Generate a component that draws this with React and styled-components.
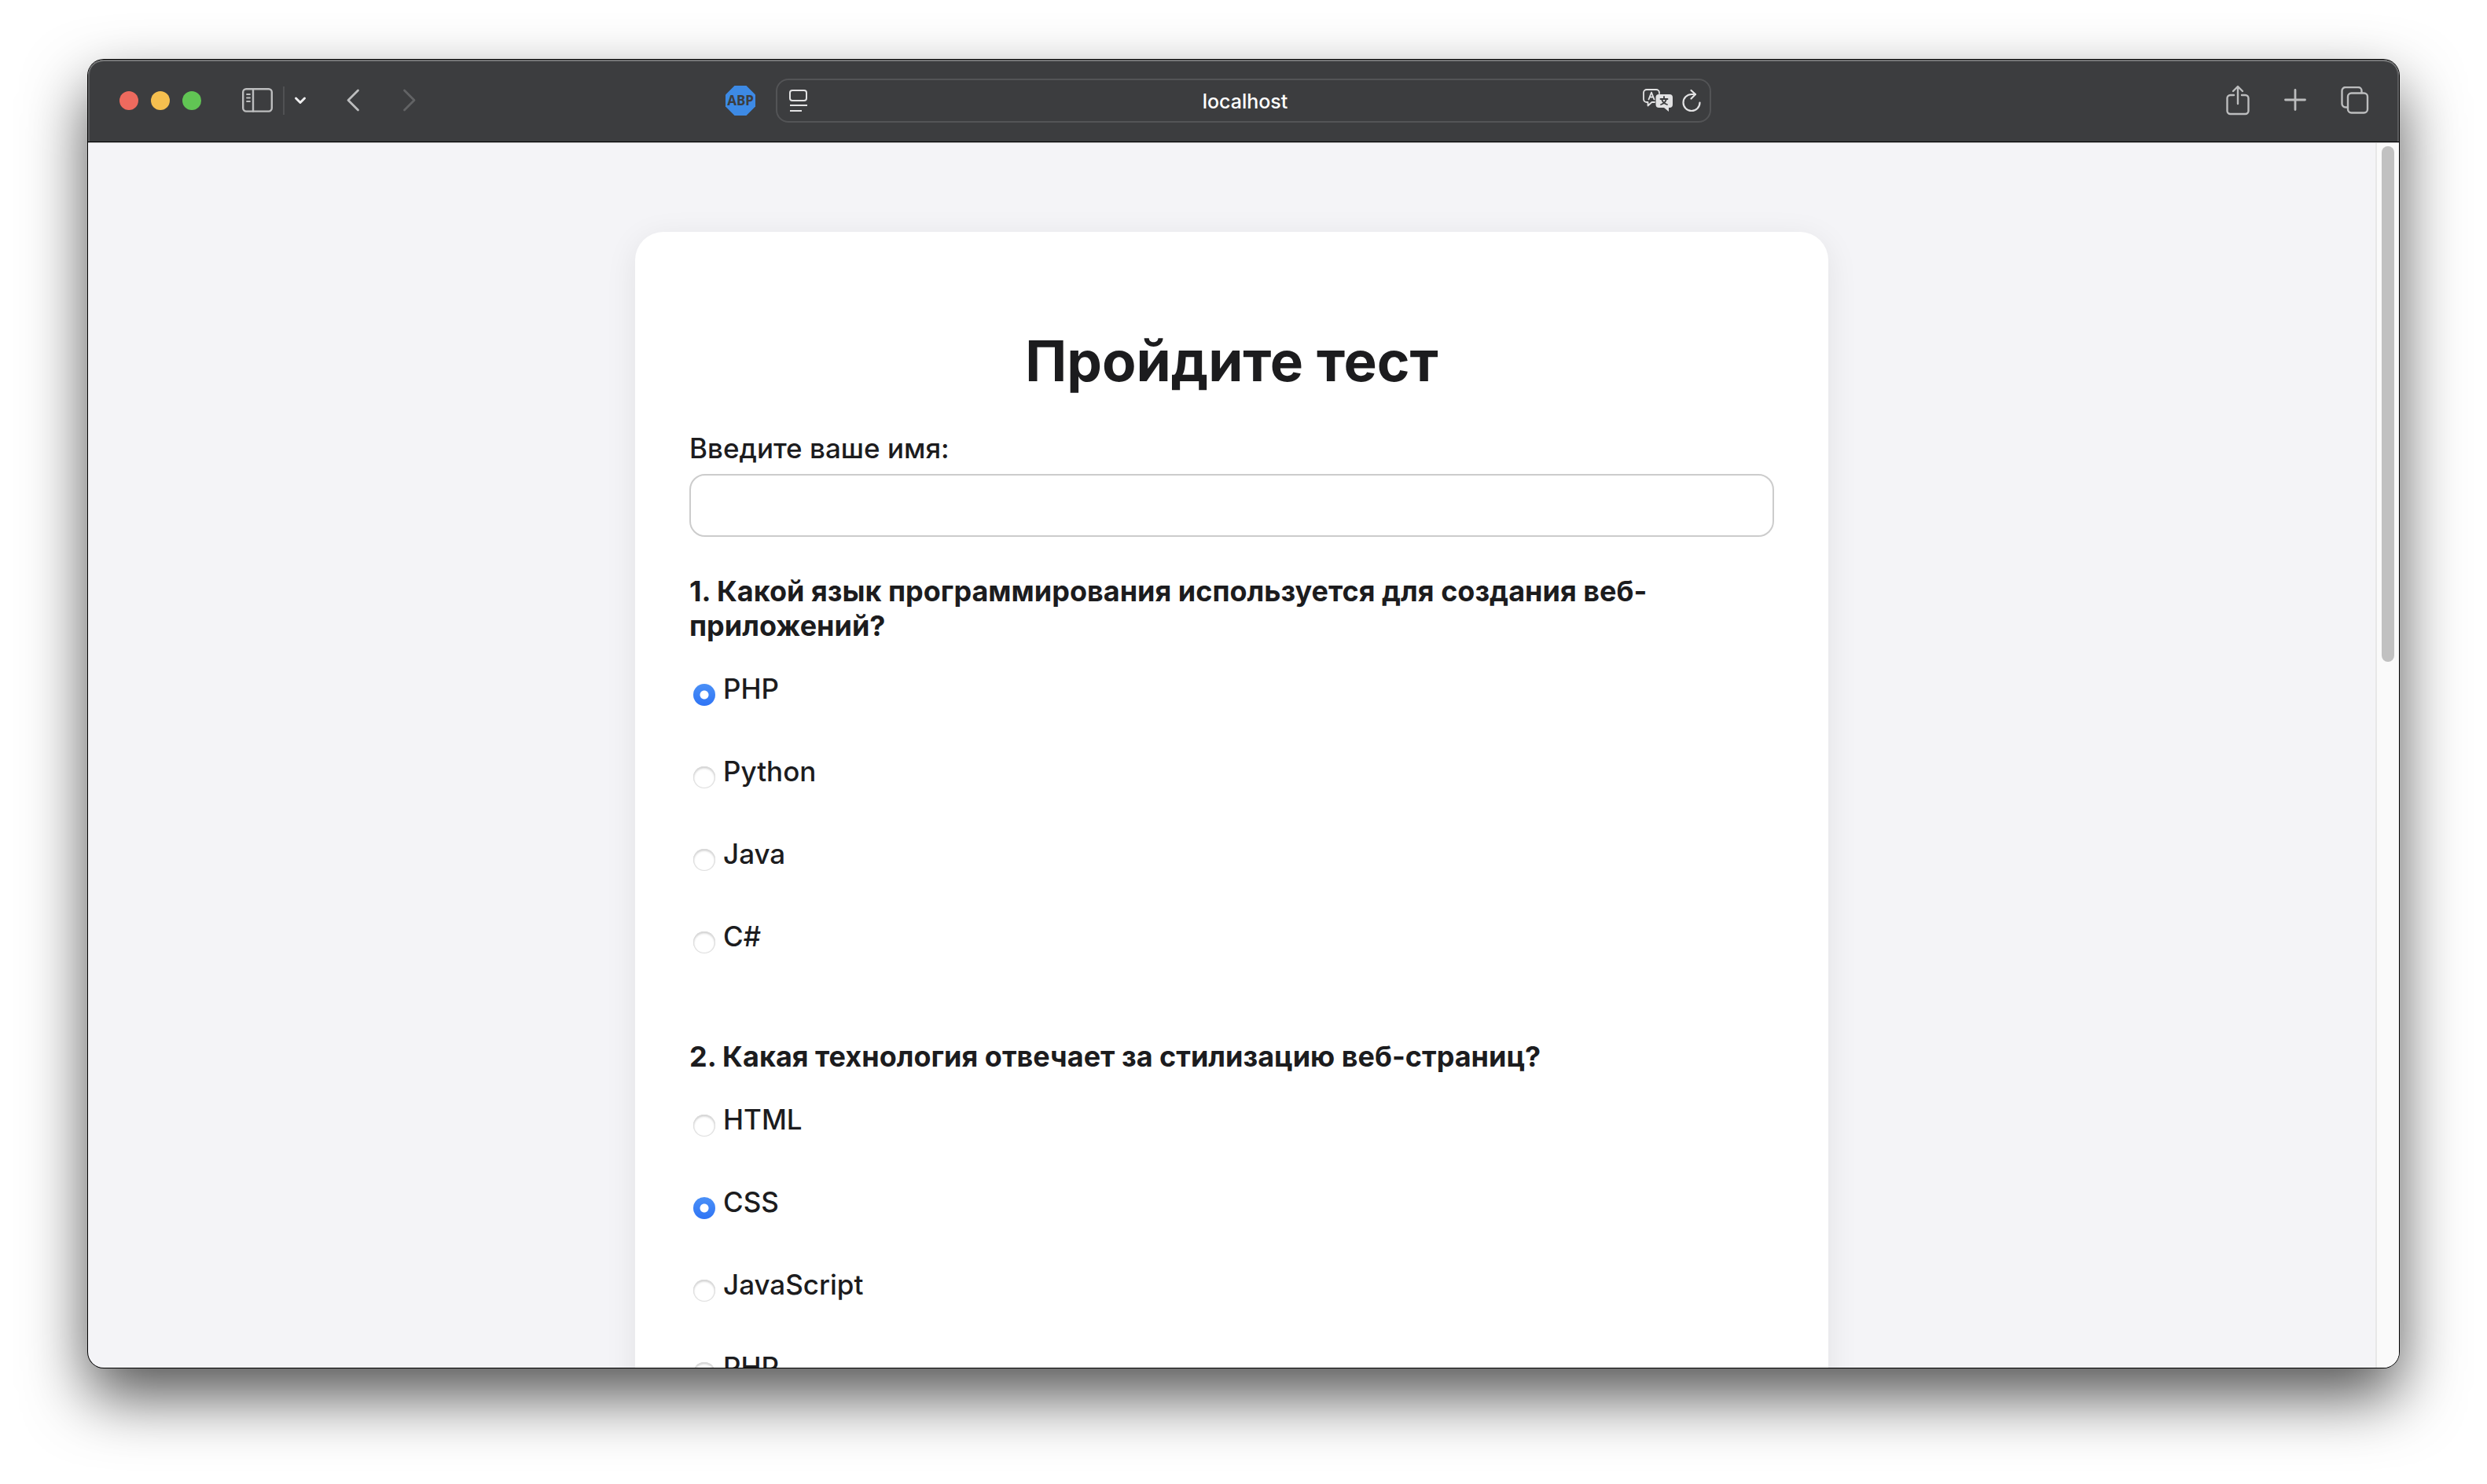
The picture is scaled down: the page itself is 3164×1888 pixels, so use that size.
import React, { useState } from "react";
import styled, { createGlobalStyle } from "styled-components";

const GlobalStyle = createGlobalStyle`
  *, *::before, *::after { box-sizing: border-box; }
  html, body { margin: 0; background: #fff; }
  body {
    font-family: Inter, "Liberation Sans", sans-serif;
    font-size: 35px;
    font-weight: 500;
    line-height: 44px;
    color: #1c1c1e;
  }
`;

const Desktop = styled.div`
  display: flex;
  height: 100vh;
  padding: 76px 112px 148px;
  background: #fff;
`;

const BrowserWindow = styled.div`
  flex: 1;
  min-width: 0;
  display: flex;
  flex-direction: column;
  overflow: hidden;
  border-radius: 20px;
  background: #f4f4f7;
  box-shadow: 0 0 0 1px #000, 0 36px 80px rgba(0, 0, 0, 0.68);
`;

const Toolbar = styled.header`
  flex: none;
  display: grid;
  grid-template-columns: 1fr minmax(0, 1190px) 1fr;
  align-items: center;
  height: 105px;
  border-bottom: 1px solid #000;
  border-radius: 20px 20px 0 0;
  background: #3c3d3f;
  box-shadow: inset 0 2px 0 #737475, inset 2px 0 0 #5d5e60, inset -2px 0 0 #5d5e60;
`;

const ToolGroup = styled.div`
  display: flex;
  align-items: center;
  padding: ${(p) => (p.$end ? "0 38px 0 0" : "0 26px 0 40px")};
  justify-content: ${(p) => (p.$end ? "flex-end" : "flex-start")};
  gap: ${(p) => p.$gap || 0}px;
`;

const Lights = styled.div`
  display: flex;
  gap: 16px;
  margin-right: 52px;
`;

const Light = styled.button`
  width: 24px;
  height: 24px;
  padding: 0;
  border: 0;
  border-radius: 50%;
  background: ${(p) => p.$color};
`;

const IconButton = styled.button`
  display: flex;
  flex: none;
  padding: 0;
  border: 0;
  background: none;
  color: ${(p) => p.$color || "#bcbdbe"};
  margin-left: ${(p) => (p.$push ? "auto" : "0")};

  svg {
    display: block;
    fill: none;
    stroke: currentColor;
    stroke-linecap: round;
    stroke-linejoin: round;
  }
`;

const Divider = styled.span`
  width: 2px;
  height: 36px;
  margin: 0 12px;
  background: #505153;
`;

const NavButtons = styled.nav`
  display: flex;
  gap: 54px;
  margin-left: 50px;
`;

const AddressBar = styled.div`
  display: grid;
  grid-template-columns: 90px 1fr 90px;
  align-items: center;
  height: 56px;
  border: 2px solid #535456;
  border-radius: 16px;
`;

const AddressTools = styled.div`
  display: flex;
  align-items: center;
  gap: 12px;
  padding: 0 11px 0 15px;
  justify-content: ${(p) => (p.$end ? "flex-end" : "flex-start")};
`;

const AddressInput = styled.input`
  width: 100%;
  min-width: 0;
  padding: 2px 0 0 4px;
  border: 0;
  outline: 0;
  background: none;
  color: #fff;
  font: 500 25px/32px Inter, "Liberation Sans", sans-serif;
  text-align: center;
`;

const Viewport = styled.div`
  flex: 1;
  min-height: 0;
  display: flex;
  border-top: 1px solid #b9b9ba;
`;

const Page = styled.main`
  flex: 1;
  min-width: 0;
  overflow: hidden;
  padding: 113px 40px 0;
`;

const ScrollTrack = styled.div`
  flex: none;
  width: 30px;
  padding: 4px 6px;
  border-left: 2px solid #e8e8e8;
  background: #fafafa;
`;

const ScrollThumb = styled.div`
  height: 656px;
  border-radius: 8px;
  background: #c1c1c1;
`;

const Card = styled.form`
  max-width: 1518px;
  margin: 0 auto;
  padding: 120px 69px 70px;
  border-radius: 36px;
  background: #fff;
  box-shadow: 0 8px 40px rgba(0, 0, 0, 0.08);
`;

const Title = styled.h1`
  margin: 0 0 45px;
  font-size: 71px;
  line-height: 88px;
  font-weight: 700;
  text-align: center;
`;

const NameLabel = styled.label`
  display: block;
  margin-bottom: 11px;
`;

const NameInput = styled.input`
  display: block;
  width: 100%;
  height: 80px;
  margin-bottom: 47px;
  padding: 0 20px;
  border: 2px solid #ccc;
  border-radius: 20px;
  outline: 0;
  background: #fff;
  color: inherit;
  font: inherit;
`;

const Question = styled.fieldset`
  min-width: 0;
  margin: 0 0 48px;
  padding: 0;
  border: 0;
`;

const QuestionText = styled.legend`
  margin-bottom: 36px;
  padding: 0;
  font-size: 36px;
  font-weight: 700;
`;

const Option = styled.label`
  display: flex;
  align-items: flex-start;
  gap: 10px;
  margin-bottom: 61px;
  padding-left: 5px;
`;

const Radio = styled.input`
  appearance: none;
  flex: none;
  width: 28px;
  height: 28px;
  margin: 16px 0 0;
  border-radius: 50%;
  background: #fff;
  box-shadow: inset 0 0 1px 1px #dcdcdc, inset 0 2px 3px #c4c4c4;

  &:checked {
    background:
      radial-gradient(circle, #fff 5px, transparent 6px),
      linear-gradient(#4a90f7, #2f74f5);
    box-shadow: none;
  }
`;

const questions = [
  {
    id: "q1",
    text: "1. Какой язык программирования используется для создания веб-приложений?",
    options: ["PHP", "Python", "Java", "C#"],
    initial: "PHP",
  },
  {
    id: "q2",
    text: "2. Какая технология отвечает за стилизацию веб-страниц?",
    options: ["HTML", "CSS", "JavaScript", "PHP"],
    initial: "CSS",
  },
];

const SidebarIcon = () => (
  <svg width="40" height="32" viewBox="0 0 40 32" strokeWidth="2.4">
    <rect x="1.2" y="1.2" width="36.6" height="28.4" rx="4" />
    <path d="M14 1.5v28" />
    <path d="M6 8h4M6 12.5h4M6 17h4" strokeWidth="1.8" />
  </svg>
);

const ChevronDown = () => (
  <svg width="16" height="12" viewBox="0 0 16 12" strokeWidth="3">
    <path d="M2.5 3l5.5 5.5L13.5 3" />
  </svg>
);

const ChevronLeft = () => (
  <svg width="18" height="30" viewBox="0 0 18 30" strokeWidth="2.8">
    <path d="M15.5 2L3 14.5l12.5 12.5" />
  </svg>
);

const ChevronRight = () => (
  <svg width="18" height="30" viewBox="0 0 18 30" strokeWidth="2.8">
    <path d="M2.5 2L15 14.5L2.5 27" />
  </svg>
);

const BlockerText = styled.text`
  fill: #3c3d3f;
  stroke: none;
  font: 700 17px "Noto Sans", sans-serif;
  text-anchor: middle;
`;

const BlockerIcon = () => (
  <svg width="38" height="38" viewBox="0 0 38 38">
    <path d="M11.5 0h15L38 11.5v15L26.5 38h-15L0 26.5v-15z" fill="#3d8ae5" stroke="none" />
    <BlockerText x="19" y="25">ABP</BlockerText>
  </svg>
);

const ReaderIcon = () => (
  <svg width="24" height="28" viewBox="0 0 24 28" strokeWidth="2">
    <rect x="1" y="1" width="21" height="13" rx="3" />
    <path d="M1 20h22M1 27h15" strokeLinecap="butt" />
  </svg>
);

const TranslateIcon = () => (
  <svg width="38" height="30" viewBox="0 0 38 30" strokeWidth="1.8">
    <path d="M15 17h-3.5l-5 4.500v-4.500H5a4 4 0 0 1-4-4V5a4 4 0 0 1 4-4h12a4 4 0 0 1 4 4v1" />
    <path d="M7.500 13.500L11 4.500l3.500 9M8.800 10.500h4.400" />
    <path
      d="M20.500 7H34a4 4 0 0 1 4 4v9a4 4 0 0 1-4 4h-1v5l-6-5h-6.500a4 4 0 0 1-4-4v-9a4 4 0 0 1 4-4z"
      fill="currentColor"
      stroke="none"
    />
    <path d="M27 10v2.500M22.500 13h9M24.200 13.500c.8 3 3.300 5.500 6.800 6.500M29.800 13.500c-.8 3-3.300 5.500-6.800 6.500" stroke="#3c3d3f" />
  </svg>
);

const ReloadIcon = () => (
  <svg width="24" height="30" viewBox="0 0 24 30" strokeWidth="2.2">
    <path d="M17 7H12A10.500 10.500 0 1 0 22.500 17.500" />
    <path d="M11.500 2L17 7l-5.500 5.500" />
  </svg>
);

const ShareIcon = () => (
  <svg width="30" height="40" viewBox="0 0 30 40" strokeWidth="2.4">
    <path d="M10 13H5.500a4 4 0 0 0-4 4v16a4 4 0 0 0 4 4h19a4 4 0 0 0 4-4v-16a4 4 0 0 0-4-4H20" />
    <path d="M15 24V2.500M9 8L15 2l6 6" />
  </svg>
);

const PlusIcon = () => (
  <svg width="28" height="30" viewBox="0 0 28 30" strokeWidth="2.8">
    <path d="M14 1.5v25M1.5 14h25" />
  </svg>
);

const TabsIcon = () => (
  <svg width="36" height="36" viewBox="0 0 36 36" strokeWidth="2.4">
    <rect x="9" y="8.5" width="25" height="25" rx="4.5" />
    <path d="M8.5 26.5H6A4.5 4.5 0 0 1 1.500 22V5.500A4.500 4.500 0 0 1 6 1h16a4.500 4.500 0 0 1 4.500 4.500V8" />
  </svg>
);

function QuestionBlock({ question }) {
  const [value, setValue] = useState(question.initial);
  return (
    <Question>
      <QuestionText>{question.text}</QuestionText>
      {question.options.map((option) => (
        <Option key={option}>
          <Radio
            type="radio"
            name={question.id}
            value={option}
            checked={value === option}
            onChange={() => setValue(option)}
          />
          {option}
        </Option>
      ))}
    </Question>
  );
}

export default function App() {
  return (
    <>
      <GlobalStyle />
      <Desktop>
        <BrowserWindow>
          <Toolbar>
            <ToolGroup>
              <Lights>
                <Light type="button" aria-label="Закрыть" $color="#ed6a5e" />
                <Light type="button" aria-label="Свернуть" $color="#f5bf4f" />
                <Light type="button" aria-label="Развернуть" $color="#61c554" />
              </Lights>
              <IconButton type="button" aria-label="Боковая панель"><SidebarIcon /></IconButton>
              <Divider />
              <IconButton type="button" aria-label="Группы вкладок" $color="#eeeeef"><ChevronDown /></IconButton>
              <NavButtons>
                <IconButton type="button" aria-label="Назад"><ChevronLeft /></IconButton>
                <IconButton type="button" aria-label="Вперёд" $color="#626365"><ChevronRight /></IconButton>
              </NavButtons>
              <IconButton type="button" aria-label="Блокировщик" $push><BlockerIcon /></IconButton>
            </ToolGroup>
            <AddressBar>
              <AddressTools>
                <IconButton type="button" aria-label="Режим чтения" $color="#e2e2e3"><ReaderIcon /></IconButton>
              </AddressTools>
              <AddressInput type="text" aria-label="Адрес" defaultValue="localhost" />
              <AddressTools $end>
                <IconButton type="button" aria-label="Перевести" $color="#e2e2e3"><TranslateIcon /></IconButton>
                <IconButton type="button" aria-label="Обновить" $color="#e2e2e3"><ReloadIcon /></IconButton>
              </AddressTools>
            </AddressBar>
            <ToolGroup $end $gap={44}>
              <IconButton type="button" aria-label="Поделиться"><ShareIcon /></IconButton>
              <IconButton type="button" aria-label="Новая вкладка"><PlusIcon /></IconButton>
              <IconButton type="button" aria-label="Все вкладки"><TabsIcon /></IconButton>
            </ToolGroup>
          </Toolbar>
          <Viewport>
            <Page>
              <Card>
                <Title>Пройдите тест</Title>
                <NameLabel htmlFor="name">Введите ваше имя:</NameLabel>
                <NameInput id="name" name="name" type="text" />
                {questions.map((question) => (
                  <QuestionBlock key={question.id} question={question} />
                ))}
              </Card>
            </Page>
            <ScrollTrack>
              <ScrollThumb />
            </ScrollTrack>
          </Viewport>
        </BrowserWindow>
      </Desktop>
    </>
  );
}
